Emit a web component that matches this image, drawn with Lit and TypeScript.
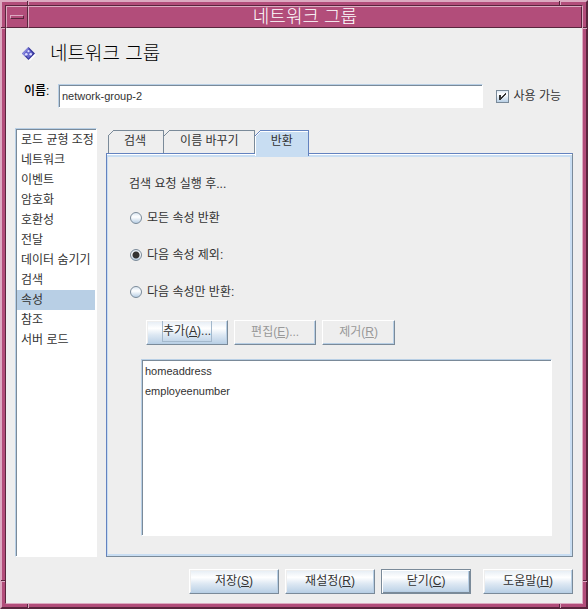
import { LitElement, html, css, svg } from "lit";
import { customElement, state } from "lit/decorators.js";
import { classMap } from "lit/directives/class-map.js";

const CATEGORIES = [
  "로드 균형 조정", "네트워크", "이벤트", "암호화", "호환성", "전달",
  "데이터 숨기기", "검색", "속성", "참조", "서버 로드",
];
const TABS = ["검색", "이름 바꾸기", "반환"];
const MODES = ["모든 속성 반환", "다음 속성 제외:", "다음 속성만 반환:"];
const ATTRIBUTES = ["homeaddress", "employeenumber"];

@customElement("app-root")
export class AppRoot extends LitElement {
  @state() private category = 8;
  @state() private tab = 2;
  @state() private mode = 1;

  static styles = css`
    :host {
      display: block;
      font: 12px/20px "Liberation Sans", "Noto Sans CJK KR", sans-serif;
      color: #333;
      --mag: #b24d7a;
      --magl: #dcaac1;
      --magd: #59253d;
      --steel: #7a8a99;
      --sky: #b8cfe5;
      --blue: #6382bf;
      --pale: #c8ddf2;
    }
    * { box-sizing: border-box; }
    button, input { font: inherit; color: inherit; margin: 0; }
    button { padding: 0; border: 0; background: none; white-space: nowrap; }
    ul { list-style: none; margin: 0; padding: 0; }
    .frame {
      position: relative;
      display: flex;
      min-height: 100vh;
      padding: 3px;
      background: var(--mag);
      border: 2px solid;
      border-color: var(--magl) var(--magd) var(--magd) var(--magl);
    }
    .inner {
      flex: 1;
      display: flex;
      flex-direction: column;
      background: #eee;
      border: 1px solid;
      border-color: var(--magd) var(--magl) var(--magl) var(--magd);
    }
    .notch { position: absolute; background: var(--magd); }
    .notch.v { width: 2px; height: 4px; border-right: 1px solid var(--magl); }
    .notch.h { height: 2px; width: 4px; border-bottom: 1px solid var(--magl); }
    .l { left: 25px; }
    .r { right: 25px; }
    .t { top: -1px; }
    .b { bottom: -1px; }
    .e { left: -1px; }
    .w { right: -1px; }
    .up { top: 25px; }
    .dn { bottom: 25px; }
    .titlebar {
      display: flex;
      height: 22px;
      background: var(--mag);
      color: #fff;
    }
    .menu {
      width: 22px;
      border: 1px solid;
      border-color: var(--magl) var(--magd) var(--magd) var(--magl);
      display: grid;
      place-items: center;
    }
    .dash {
      width: 14px;
      height: 4px;
      border: 1px solid;
      border-color: var(--magl) var(--magd) var(--magd) var(--magl);
    }
    .caption {
      flex: 1;
      border: 1px solid;
      border-color: var(--magl) var(--magd) var(--magd) var(--magl);
      text-align: center;
      font-size: 18px;
      font-weight: 300;
    }
    .head {
      display: flex;
      align-items: center;
      gap: 14px;
      height: 28px;
      margin: 12px 16px 16px;
    }
    h1 { margin: 0; font-size: 19px; line-height: 28px; font-weight: 300; color: #000; }
    .name { display: flex; padding: 0 21px 0 18px; }
    .name-label { width: 34px; line-height: 14px; font-weight: 500; color: #000; }
    .field {
      flex: 1;
      min-width: 0;
      height: 24px;
      padding: 0 2px;
      font-size: 11px;
    }
    .well {
      background: #fff;
      border: 1px solid;
      border-color: var(--sky) #fff #fff var(--sky);
      box-shadow: inset 1px 1px var(--steel);
    }
    .field.well { outline: 0; border-radius: 0; padding-left: 3px; }
    .check { display: flex; align-items: center; gap: 5px; margin-left: 13px; }
    .tick { position: relative; display: grid; width: 13px; height: 13px; }
    .box {
      appearance: none;
      width: 13px;
      height: 13px;
      border: 1px solid var(--steel);
      background: linear-gradient(#dde8f3, #fff 30%, var(--sky));
    }
    .tick svg { position: absolute; inset: 0; pointer-events: none; display: none; }
    .box:checked + svg { display: block; }
    .main { flex: 1; display: flex; gap: 9px; padding: 20px 9px 0; }
    .side { width: 82px; padding: 1px; }
    .row {
      display: block;
      width: 100%;
      height: 20px;
      padding: 0 4px;
      text-align: left;
    }
    .side .row { width: 78px; white-space: nowrap; padding-right: 0; }
    .row.on { background: var(--sky); }
    .work { flex: 1; min-width: 0; display: flex; flex-direction: column; padding-top: 2px; }
    .tabs { display: flex; padding-left: 2px; height: 23px; }
    .tab { display: flex; height: 23px; }
    .tab svg { display: block; }
    .tab-text {
      height: 23px;
      padding: 0 15px 0 10px;
      border: solid var(--steel);
      border-width: 1px 1px 0 0;
    }
    .tab:first-child .tab-text { padding-right: 17px; }
    .tab.on { height: 26px; z-index: 1; }
    .tab.on .tab-text {
      height: 26px;
      background: var(--pale);
      border-color: var(--blue);
      box-shadow: inset 0 1px #fff;
    }
    .pane {
      flex: 1;
      display: flex;
      flex-direction: column;
      padding: 20px;
      border: 1px solid;
      border-color: var(--blue) var(--steel) var(--steel) var(--blue);
      box-shadow: inset 0 1px #fff, inset 0 3px var(--pale), inset 1px 0 var(--pale), inset -2px -2px var(--pale);
    }
    .modes {
      display: grid;
      gap: 17px;
      margin: 0;
      padding: 0 0 0 2px;
      border: 0;
    }
    .lead { padding: 0; margin-bottom: 14px; }
    .mode { display: flex; align-items: center; gap: 5px; padding-left: 1px; }
    .radio {
      appearance: none;
      width: 12px;
      height: 12px;
      border: 1px solid var(--steel);
      border-radius: 50%;
      background: linear-gradient(#dde8f3, #fff 40%, var(--sky));
    }
    .radio:checked {
      background: radial-gradient(circle, #333 3px, transparent 4px), linear-gradient(#dde8f3, #fff 40%, var(--sky));
    }
    .tools { display: flex; gap: 6px; padding: 18px 0 14px 19px; }
    .btn {
      height: 25px;
      padding: 0 16px 2px;
      border: 1px solid;
      border-color: #fff var(--steel) var(--steel) #fff;
      background: linear-gradient(#e4ecf4, #fff 32%, #dde8f3 60%, var(--sky));
      box-shadow: inset -1px -1px var(--sky), inset 1px 1px #eee;
    }
    .btn:disabled { background: #eee; color: #999; }
    .btn.wide { width: 90px; padding: 0 0 2px; }
    .ring {
      display: block;
      height: 21px;
      margin: 0 -1px;
      border: 1px solid #a3b8cc;
      border-top: 0;
    }
    .attrs { flex: 1; margin-left: 14px; padding: 1px; font-size: 11px; }
    .attrs .row { padding: 0 2px; }
    .foot { display: flex; justify-content: flex-end; gap: 6px; padding: 12px 9px 9px; }
    .default {
      border-color: var(--steel);
      box-shadow: inset 1px 1px #fff, inset -1px -1px var(--steel), inset -2px -2px var(--sky);
    }
    .apart { margin-left: 6px; }
  `;

  private corner(on: boolean, i: number) {
    const line = on ? "#6382bf" : "#7a8a99";
    return html`<svg width="6" height=${on ? 26 : 23} shape-rendering="crispEdges" aria-hidden="true">
      ${on ? svg`<path d="M1 26V6L6 1V26z" fill="#c8ddf2"/><path d="M0 26V6h1v20zM1 5h1v1h-1zM2 4h1v1h-1zM3 3h1v1h-1zM4 2h1v1h-1zM5 1h1v1h-1z" fill="#fff"/>` : ""}
      ${i === 0 ? svg`<path d="M0 5h1v18h-1z" fill=${line}/>` : ""}
      <path d="M0 5h1v1h-1zM1 4h1v1h-1zM2 3h1v1h-1zM3 2h1v1h-1zM4 1h1v1h-1zM5 0h1v1h-1z" fill=${line} />
    </svg>`;
  }

  render() {
    return html`
      <div class="frame">
        <i class="notch v l t"></i><i class="notch v r t"></i>
        <i class="notch v l b"></i><i class="notch v r b"></i>
        <i class="notch h e up"></i><i class="notch h e dn"></i>
        <i class="notch h w up"></i><i class="notch h w dn"></i>
        <div class="inner">
          <header class="titlebar">
            <button class="menu" aria-label="창 메뉴"><span class="dash"></span></button>
            <div class="caption">네트워크 그룹</div>
          </header>
          <div class="head">
            <svg width="14" height="14" viewBox="0 0 14 14" aria-hidden="true">
              <path d="M7 2L14 8L8 14L1 8z" fill="#fff" />
              <path d="M6.5 0L13 6.5L6.5 13L0 6.5z" fill="#333399" />
              <path d="M6.5 0L0 6.5L3 9.5L6.5 6z" fill="#8c8ce0" />
              <path d="M6.5 1.5L11 6.5L6.5 11.5L2 6.5z" fill="#6666cc" />
              <circle cx="6.5" cy="4.2" r="1.1" fill="#ddf" />
              <circle cx="4.3" cy="7.3" r="1.3" fill="#ddf" />
              <circle cx="8.7" cy="7.3" r="1.3" fill="#ddf" />
            </svg>
            <h1>네트워크 그룹</h1>
          </div>
          <div class="name">
            <label class="name-label" for="name">이름:</label>
            <input class="field well" id="name" type="text" .value=${"network-group-2"} />
            <label class="check">
              <span class="tick">
                <input class="box" type="checkbox" checked />
                <svg width="13" height="13" shape-rendering="crispEdges" aria-hidden="true">
                  <path d="M3 5h2v2h1v-1h1v-1h1v-1h1v-1h1v2h-1v1h-1v1h-1v1h-1v1h-1v1h-2z" fill="#333" />
                </svg>
              </span>
              사용 가능
            </label>
          </div>
          <div class="main">
            <nav class="side well">
              <ul>
                ${CATEGORIES.map((c, i) => html`<li>
                  <button class=${classMap({ row: true, on: i === this.category })}
                    @click=${() => (this.category = i)}>${c}</button>
                </li>`)}
              </ul>
            </nav>
            <section class="work">
              <div class="tabs" role="tablist">
                ${TABS.map((t, i) => html`<button role="tab" aria-selected=${i === this.tab}
                  class=${classMap({ tab: true, on: i === this.tab })}
                  @click=${() => (this.tab = i)}>
                  ${this.corner(i === this.tab, i)}<span class="tab-text">${t}</span>
                </button>`)}
              </div>
              <div class="pane" role="tabpanel">
                <fieldset class="modes">
                  <legend class="lead">검색 요청 실행 후...</legend>
                  ${MODES.map((m, i) => html`<label class="mode">
                    <input class="radio" type="radio" name="mode" .checked=${i === this.mode}
                      @change=${() => (this.mode = i)} />${m}
                  </label>`)}
                </fieldset>
                <div class="tools">
                  <button class="btn"><span class="ring">추가(<u>A</u>)...</span></button>
                  <button class="btn" disabled>편집(<u>E</u>)...</button>
                  <button class="btn" disabled>제거(<u>R</u>)</button>
                </div>
                <ul class="attrs well">
                  ${ATTRIBUTES.map((a) => html`<li><button class="row">${a}</button></li>`)}
                </ul>
              </div>
            </section>
          </div>
          <footer class="foot">
            <button class="btn wide">저장(<u>S</u>)</button>
            <button class="btn wide">재설정(<u>R</u>)</button>
            <button class="btn wide default">닫기(<u>C</u>)</button>
            <button class="btn wide apart">도움말(<u>H</u>)</button>
          </footer>
        </div>
      </div>
    `;
  }
}
